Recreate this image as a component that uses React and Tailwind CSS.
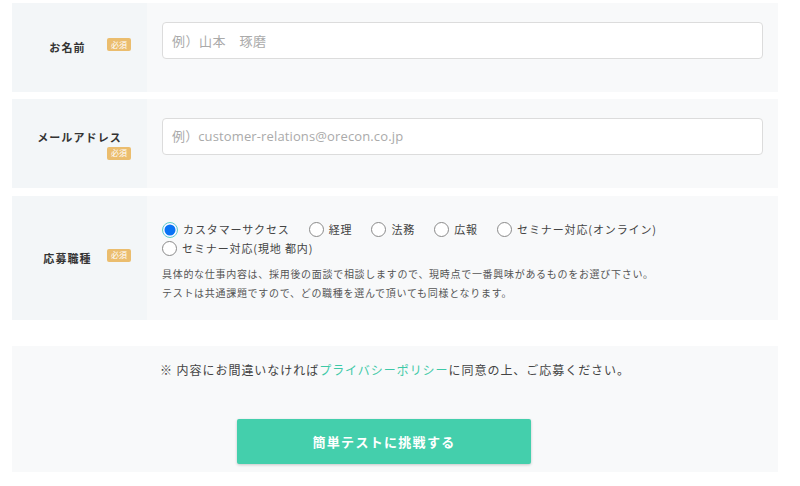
import React, { useState } from "react";

const jp = { fontFamily: '"Noto Sans CJK JP", "Noto Sans", sans-serif' };

function Badge() {
  return (
    <span className="ml-auto inline-flex h-[13px] w-[24px] items-center justify-center rounded-[2px] bg-[#ebbd6e] text-[8px] leading-none text-white">
      必須
    </span>
  );
}

function Label({ children }) {
  return (
    <div className="flex w-[135px] shrink-0 flex-wrap content-center items-start bg-[#f3f6f8] px-[16px]">
      <span className="grow text-center text-[11px] font-bold leading-[19px] tracking-[0.1em] text-[#333]">{children}</span>
      <Badge />
    </div>
  );
}

function Radio({ checked, label, onClick }) {
  return (
    <label className="flex cursor-pointer items-center gap-[5px]" onClick={onClick}>
      {checked ? (
        <span className="flex h-[16px] w-[16px] items-center justify-center rounded-full border border-[#5fd3c0]">
          <span className="h-[14px] w-[14px] rounded-full bg-[#0a73f5] ring-[1.5px] ring-inset ring-white" />
        </span>
      ) : (
        <span className="h-[15px] w-[15px] rounded-full border border-[#8a8a8a] bg-white" />
      )}
      <span className="text-[11px] tracking-[0.08em] text-[#444]">{label}</span>
    </label>
  );
}

const jobs = [
  "カスタマーサクセス",
  "経理",
  "法務",
  "広報",
  "セミナー対応(オンライン)",
  "セミナー対応(現地 都内)",
];

export default function App() {
  const [job, setJob] = useState(0);

  return (
    <div className="flex h-[486px] w-[800px] flex-col bg-white pl-[12px] pr-[22px] pt-[3px]" style={jp}>
      <div className="flex h-[89px]">
        <Label>お名前</Label>
        <div className="flex-1 bg-[#f8f9fa] px-[15px] pt-[19px]">
          <div className="flex h-[37px] items-center rounded-[4px] border border-[#dcdcdc] bg-white px-[9px] text-[13px] tracking-[0.04em] text-[#aaa]">
            例）山本　琢磨
          </div>
        </div>
      </div>

      <div className="mt-[7px] flex h-[89px]">
        <Label>メールアドレス</Label>
        <div className="flex-1 bg-[#f8f9fa] px-[15px] pt-[19px]">
          <div
            className="flex h-[37px] items-center rounded-[4px] border border-[#dcdcdc] bg-white px-[9px] text-[13px] tracking-[0.01em] text-[#aaa]"
            style={{ fontFamily: '"Open Sans", "Noto Sans CJK JP", sans-serif' }}
          >
            例）customer-relations@orecon.co.jp
          </div>
        </div>
      </div>

      <div className="mt-[8px] flex h-[124px]">
        <Label>応募職種</Label>
        <div className="flex-1 bg-[#f8f9fa] px-[15px] pt-[24px]">
          <div className="flex flex-wrap gap-x-[19px] leading-[19px]">
            {jobs.map((j, i) => (
              <Radio key={j} label={j} checked={job === i} onClick={() => setJob(i)} />
            ))}
          </div>
          <p className="mt-[6px] text-[10px] leading-[19px] tracking-[0.07em] text-[#555]">
            具体的な仕事内容は、採用後の面談で相談しますので、現時点で一番興味があるものをお選び下さい。
            <br />
            テストは共通課題ですので、どの職種を選んで頂いても同様となります。
          </p>
        </div>
      </div>

      <div className="mt-[26px] flex h-[126px] flex-col items-center bg-[#f8f9fa] pt-[14px]">
        <p className="text-[12px] leading-[20px] tracking-[0.08em] text-[#444]">
          ※ 内容にお間違いなければ<span className="text-[#3ec9a7]">プライバシーポリシー</span>に同意の上、ご応募ください。
        </p>
        <button className="mr-[22px] mt-[39px] h-[45px] w-[294px] rounded-[2px] bg-[#44cfac] text-[13px] font-bold tracking-[0.1em] text-white shadow-[0_1px_3px_rgba(0,0,0,0.2)]">
          簡単テストに挑戦する
        </button>
      </div>
    </div>
  );
}
